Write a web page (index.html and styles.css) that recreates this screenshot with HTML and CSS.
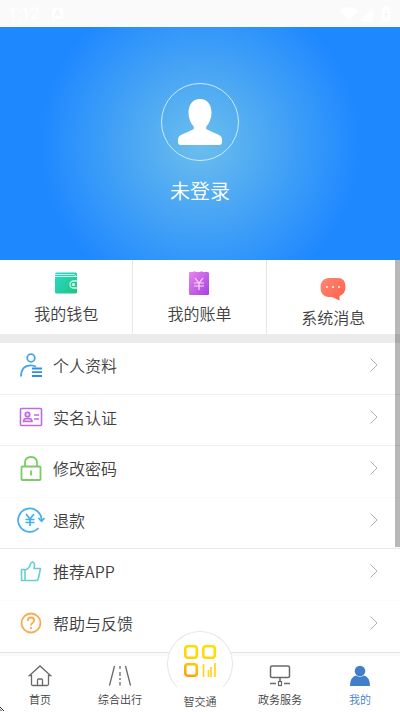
FILE: index.html
```html
<!DOCTYPE html>
<html lang="zh-CN">
<head>
<meta charset="utf-8">
<meta name="viewport" content="width=device-width, initial-scale=1">
<title>我的</title>
<link rel="stylesheet" href="styles.css">
</head>
<body>
<header class="status">
  <span class="clock">1:12</span>
  <svg class="badge" width="11" height="11" viewBox="0 0 11 11"><rect width="11" height="11" rx="1" fill="#fff"/><path d="M3 8.500 5.500 2.500 8 8.500M4 6.500H7" fill="none" stroke="#f5f5f5" stroke-width="1.300"/></svg>
  <svg class="signals" width="52" height="16" viewBox="0 0 52 16" fill="#fff"><path d="M0 4Q9-2 18 4L9 15Z"/><path d="M20 15 33 2V15Z"/><path d="M42 2h2V0h4v2h2v13h-8z"/><path d="M47 4l-3 5h2l-1 4 3-5h-2z" fill="#f2f2f2"/></svg>
</header>

<main class="content">
  <section class="hero">
    <a class="avatar" href="#" aria-label="头像">
      <svg width="44" height="46" viewBox="0 0 44 46" fill="#fff"><path d="M22 0C14.500 0 10.500 6 10.500 14c0 5.500 2.300 10 5 13.500.8 1.500.5 2.500-1 3.300L4 35.500C1 36.800 0 38.500 0 41v2C0 45 1 46 3 46h38c2 0 3-1 3-3v-2c0-2.500-1-4.200-4-5.500l-10.500-4.700c-1.500-.8-1.800-1.800-1-3.300 2.700-3.500 5-8 5-13.500C33.500 6 29.500 0 22 0z"/></svg>
    </a>
    <a class="login" href="#">未登录</a>
  </section>

  <nav class="tiles">
    <a class="tile" href="#">
      <svg width="24" height="24" viewBox="0 0 24 24"><defs><linearGradient id="wallet" x1="0" y1="0" x2="1" y2="1"><stop offset="0" stop-color="#2bdcc6"/><stop offset="1" stop-color="#20c283"/></linearGradient></defs><rect x="1" y="1.500" width="22" height="21" rx="1.500" fill="url(#wallet)"/><path d="M1 3.500h19.500l1.500 2M1 5.500h22" fill="none" stroke="#c5f5e9"/><path d="M23 10h-3.500a3.500 3.500 0 0 0 0 7H23" fill="#25c995" stroke="#c9f7e8" stroke-width="1.300"/><circle cx="19.500" cy="13.500" r="1.500" fill="#fff"/></svg>
      <span>我的钱包</span>
    </a>
    <a class="tile" href="#">
      <svg width="24" height="24" viewBox="0 0 24 24"><defs><linearGradient id="bill" x1="0" y1="0" x2="1" y2="1"><stop offset="0" stop-color="#ea85ee"/><stop offset="1" stop-color="#a441df"/></linearGradient></defs><path d="M2 2q0-1 1-1h3q1.500-1.500 3 0h4q1.500-1.500 3 0h5q1 .5 1 1.500V23q0 1-1 1H3q-1 0-1-1z" fill="url(#bill)"/><path d="M8 7l4 5 4-5M7 12h10M7 15h10M12 12v7" fill="none" stroke="#f8dcfb" stroke-width="1.200"/></svg>
      <span>我的账单</span>
    </a>
    <a class="tile tile-message" href="#">
      <svg width="26" height="24" viewBox="0 0 26 24"><defs><linearGradient id="message" x1="0" y1="0" x2="1" y2="1"><stop offset="0" stop-color="#ff8873"/><stop offset="1" stop-color="#ff5f49"/></linearGradient></defs><path d="M8 1h10q7.500 0 7.500 9 0 6.500-6 9v4.500L12 20H8Q.5 19 .5 10.500T8 1z" fill="url(#message)"/><g fill="#fff"><circle cx="7" cy="10" r="1"/><circle cx="13" cy="10" r="1"/><circle cx="19" cy="10" r="1"/></g></svg>
      <span>系统消息</span>
    </a>
    <span class="scrollbar"></span>
  </nav>

  <nav class="menu">
    <a class="row" href="#">
      <svg class="icon" width="28" height="28" viewBox="0 0 28 28" fill="none" stroke="#46a6e8" stroke-width="1.800"><circle cx="14" cy="7" r="3.800"/><path d="M4 25.500C4 18 8 14.300 14 14.300q3 0 5 1.500"/><path d="M15 17.500h10M15 21.200h10M15 25h10" stroke="#2f8fe3"/></svg>
      <span>个人资料</span>
      <svg class="chevron" width="8" height="14" viewBox="0 0 8 14"><path d="M.5.5 7 7 .5 13.500"/></svg>
    </a>
    <a class="row" href="#">
      <svg class="icon" width="28" height="28" viewBox="0 0 28 28" fill="none" stroke="#c16be2" stroke-width="1.600"><rect x="3.500" y="5.500" width="21" height="17" rx="1"/><circle cx="10.500" cy="11.500" r="2.300" fill="#edcdf7"/><path d="M6.500 18.500q0-3 3-3h2.500q3 0 3 3z" fill="#edcdf7"/><path d="M17 12h5M17 16h5"/></svg>
      <span>实名认证</span>
      <svg class="chevron" width="8" height="14" viewBox="0 0 8 14"><path d="M.5.5 7 7 .5 13.500"/></svg>
    </a>
    <a class="row" href="#">
      <svg class="icon" width="28" height="28" viewBox="0 0 28 28" fill="none" stroke="#7bcb67" stroke-width="1.800"><rect x="4.500" y="12.500" width="19" height="13.500" rx=".8"/><path d="M8 12.500V9q0-6 6-6t6 6v3.500M14 16.500v5"/></svg>
      <span>修改密码</span>
      <svg class="chevron" width="8" height="14" viewBox="0 0 8 14"><path d="M.5.5 7 7 .5 13.500"/></svg>
    </a>
    <a class="row" href="#">
      <svg class="icon" width="28" height="28" viewBox="0 0 28 28" fill="none" stroke="#40b0ef" stroke-width="1.700"><path d="M24.500 14.500A11.700 11.700 0 1 0 21.500 22"/><path d="M21.500 12l3 3.300 3-3.300"/><path d="M9 8l4 5 4-5M8.500 13.500h9M8.500 16.500h9M13 13v7"/></svg>
      <span>退款</span>
      <svg class="chevron" width="8" height="14" viewBox="0 0 8 14"><path d="M.5.5 7 7 .5 13.500"/></svg>
    </a>
    <a class="row" href="#">
      <svg class="icon" width="28" height="28" viewBox="0 0 28 28" fill="none" stroke="#68cfd1" stroke-width="1.600" stroke-linejoin="round"><path d="M4.500 12.500H8V23.500H4.500zM8 13q4-1 5.500-6 .5-2 2-2 3 .5 1.500 6.500h6.500L21.500 21q-.5 2.500-2.500 2.500H8"/></svg>
      <span>推荐APP</span>
      <svg class="chevron" width="8" height="14" viewBox="0 0 8 14"><path d="M.5.5 7 7 .5 13.500"/></svg>
    </a>
    <a class="row" href="#">
      <svg class="icon" width="28" height="28" viewBox="0 0 28 28" fill="none" stroke="#faaa52" stroke-width="1.800"><circle cx="14" cy="14" r="9.500"/><path d="M10.800 12q0-3.500 3.200-3.500t3.200 3c0 2.500-3.200 2-3.200 5M14 18v2"/></svg>
      <span>帮助与反馈</span>
      <svg class="chevron" width="8" height="14" viewBox="0 0 8 14"><path d="M.5.5 7 7 .5 13.500"/></svg>
    </a>
  </nav>
</main>

<nav class="tabs">
  <a class="tab" href="#">
    <svg width="24" height="24" viewBox="0 0 24 24" fill="none" stroke="#6a6a6a" stroke-width="1.300"><path d="M1.500 12.500 12 3l10.500 9.500h-2V21q0 1.500-1.500 1.500H5Q3.500 22.500 3.500 21v-8.500zM9.500 22.500V17q0-1 1-1h3q1 0 1 1v5.500"/></svg>
    <span>首页</span>
  </a>
  <a class="tab" href="#">
    <svg width="24" height="24" viewBox="0 0 24 24" fill="none" stroke="#6a6a6a" stroke-width="1.300"><path d="M6.500 3 1.500 22.500M17.500 3l5 19.500M12 3v3M12 9v4M12 15v2M12 19v3.500"/></svg>
    <span>综合出行</span>
  </a>
  <a class="tab tab-center" href="#">
    <span class="bump"></span>
    <svg class="apps" width="34" height="34" viewBox="0 0 34 34" fill="none" stroke-width="3"><defs><linearGradient id="apps" gradientUnits="userSpaceOnUse" x1="20" y1="2" x2="8" y2="34"><stop offset="0" stop-color="#ffe000"/><stop offset=".5" stop-color="#ffd20a"/><stop offset="1" stop-color="#ff9d08"/></linearGradient></defs><g stroke="url(#apps)" stroke-width="2.600"><rect x="2.300" y="2.300" width="11.500" height="11.500" rx="2.500"/><rect x="20.300" y="2.300" width="11.500" height="11.500" rx="2.500"/><rect x="2.300" y="20.300" width="11.500" height="11.500" rx="2.500"/></g><path d="M20.500 20v13M25.500 26v7M28 23v10M32 19v14" stroke="#ffd51d" stroke-width="1.700"/></svg>
    <span>智交通</span>
  </a>
  <a class="tab" href="#">
    <svg width="24" height="24" viewBox="0 0 24 24" fill="none" stroke="#6a6a6a" stroke-width="1.500"><rect x="2.500" y="3" width="19" height="11.500" rx="1.500"/><path d="M12 14.500V18M2 20.500h6M16 20.500h6"/><rect x="10.500" y="18.500" width="3" height="4" stroke-width="1.200"/></svg>
    <span>政务服务</span>
  </a>
  <a class="tab tab-active" href="#" aria-current="page">
    <svg width="24" height="24" viewBox="0 0 24 24" fill="#427fcb"><circle cx="12" cy="8" r="5.300"/><path d="M2 23q0-9 6-10.500 4 2.500 8 0 6 1.500 6 10.500z"/></svg>
    <span>我的</span>
  </a>
  <svg class="pointer" width="5" height="5" viewBox="0 0 5 5" shape-rendering="crispEdges"><path d="M0 0h1v1h1v1h1v1h1v1H3V3H2V2H1V1H0z" fill="#222"/><path d="M0 2h1v1h1v1H0z" fill="#999"/></svg>
</nav>
</body>
</html>
```
FILE: styles.css
```css
* {
  box-sizing: border-box;
}

body {
  margin: 0;
  min-height: 100vh;
  display: flex;
  flex-direction: column;
  background: #fff;
  color: #404040;
  font-family: "Noto Sans CJK SC", sans-serif;
  font-size: 16px;
  font-weight: 350;
  line-height: 24px;
}

a {
  color: inherit;
  text-decoration: none;
}

svg {
  display: block;
  flex: none;
}

.status {
  height: 27px;
  display: flex;
  align-items: center;
  padding: 0 8px;
  background: #fafafa;
  color: #fff;
}

.clock {
  font-family: Roboto, sans-serif;
  font-weight: 500;
}

.badge {
  margin-left: 12px;
}

.signals {
  margin-left: auto;
}

.content {
  flex: 1;
  display: flex;
  flex-direction: column;
}

.hero {
  height: 233px;
  display: flex;
  flex-direction: column;
  align-items: center;
  padding-top: 56px;
  background: radial-gradient(circle at center, #6cbeec 0, #1e88ff 160px);
}

.avatar {
  width: 78px;
  height: 78px;
  display: grid;
  place-items: center;
  border: 1px solid #cfe9fc;
  border-radius: 50%;
}

.login {
  margin-top: 16px;
  color: #fff;
  font-size: 20px;
  line-height: 28px;
}

.tiles {
  position: relative;
  display: grid;
  grid-template-columns: repeat(3, 1fr);
  height: 83px;
  border-bottom: 9px solid #ebebec;
}

.tile {
  display: flex;
  flex-direction: column;
  align-items: center;
  gap: 6px;
  padding-top: 11px;
  border-right: 1px solid #e6e6e8;
}

.tile-message {
  padding-top: 17px;
  gap: 4px;
  border: 0;
}

.scrollbar {
  position: absolute;
  top: 0;
  right: 0;
  width: 5px;
  height: 287px;
  background: rgba(0, 0, 0, 0.28);
}

.menu {
  flex: 1;
  display: grid;
  grid-auto-rows: 1fr;
}

.row {
  display: flex;
  align-items: center;
  gap: 8px;
  padding: 0 22px 6px 17px;
  border-bottom: 1px solid #f0f0f0;
}

.row:nth-child(4n + 3),
.row:nth-child(5) {
  border-color: #fafafa;
}

.row:nth-child(4) {
  border-color: #e8e8e8;
}

.row:last-child {
  border: 0;
}

.chevron {
  margin-left: auto;
  fill: none;
  stroke: #b0b0b0;
}

.tabs {
  position: relative;
  height: 60px;
  display: grid;
  grid-template-columns: repeat(5, 1fr);
  border-top: 1px solid #e2e2e2;
  box-shadow: inset 0 3px #fafafa;
  font-size: 11px;
  line-height: 16px;
}

.tab {
  display: flex;
  flex-direction: column;
  align-items: center;
  justify-content: flex-end;
  gap: 4px;
  padding-bottom: 5px;
}

.tab-center {
  position: relative;
  padding-bottom: 3px;
}

.tab-center > span:last-child {
  position: relative;
}

.bump {
  position: absolute;
  top: -22px;
  left: 50%;
  width: 66px;
  height: 66px;
  margin-left: -33px;
  border: 1px solid #e6e6e6;
  border-bottom-color: transparent;
  border-radius: 50%;
  background: #fff;
}

.apps {
  position: absolute;
  top: -9px;
}

.tab-active {
  color: #427fcb;
}

.pointer {
  position: absolute;
  left: 0;
  bottom: 0;
}
```
